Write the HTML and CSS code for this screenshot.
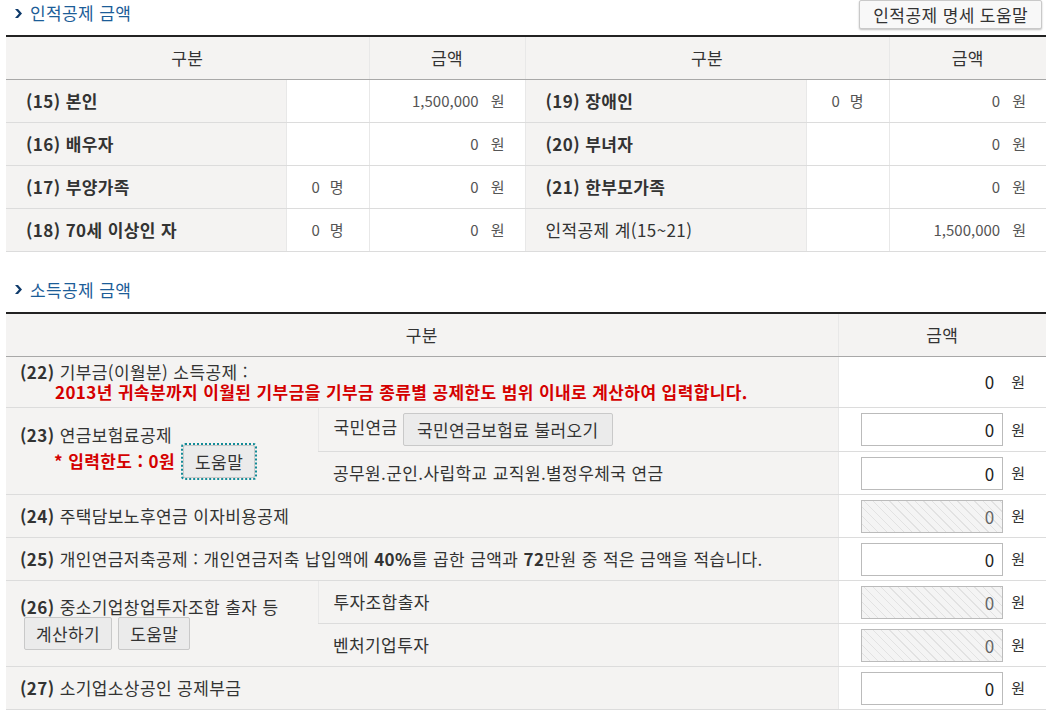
FILE: index.html
```html
<!DOCTYPE html>
<html lang="ko">
  <head>
    <meta charset="UTF-8" />
    <title>인적공제 / 소득공제 금액</title>
    <link rel="stylesheet" href="styles.css">
  </head>
  <body>
    <div class="page">
      <div class="section-head">
        <h2 class="section-title">
          <svg class="chevron" width="7" height="9" viewBox="0 0 7 9"><path d="M0 0H3L7 4.5L3 9H0L4 4.5Z" /></svg>
          인적공제 금액
        </h2>
        <button class="btn btn-guide">인적공제 명세 도움말</button>
      </div>

      <table class="grid grid-person">
        <colgroup>
          <col style="width: 280px" />
          <col style="width: 83px" />
          <col style="width: 156px" />
          <col style="width: 281px" />
          <col style="width: 83px" />
          <col style="width: 157px" />
        </colgroup>
        <thead>
          <tr>
            <th colspan="2">구분</th>
            <th>금액</th>
            <th colspan="2">구분</th>
            <th>금액</th>
          </tr>
        </thead>
        <tbody>
          <tr>
            <td class="label">(15) 본인</td>
            <td class="count"></td>
            <td class="amount">1,500,000<span class="unit">원</span></td>
            <td class="label">(19) 장애인</td>
            <td class="count">0<span class="unit-sm">명</span></td>
            <td class="amount">0<span class="unit">원</span></td>
          </tr>
          <tr>
            <td class="label">(16) 배우자</td>
            <td class="count"></td>
            <td class="amount">0<span class="unit">원</span></td>
            <td class="label">(20) 부녀자</td>
            <td class="count"></td>
            <td class="amount">0<span class="unit">원</span></td>
          </tr>
          <tr>
            <td class="label">(17) 부양가족</td>
            <td class="count">0<span class="unit-sm">명</span></td>
            <td class="amount">0<span class="unit">원</span></td>
            <td class="label">(21) 한부모가족</td>
            <td class="count"></td>
            <td class="amount">0<span class="unit">원</span></td>
          </tr>
          <tr>
            <td class="label">(18) 70세 이상인 자</td>
            <td class="count">0<span class="unit-sm">명</span></td>
            <td class="amount">0<span class="unit">원</span></td>
            <td class="label total">인적공제 계(15~21)</td>
            <td class="count"></td>
            <td class="amount">1,500,000<span class="unit">원</span></td>
          </tr>
        </tbody>
      </table>

      <div class="section-head section-head-next">
        <h2 class="section-title">
          <svg class="chevron" width="7" height="9" viewBox="0 0 7 9"><path d="M0 0H3L7 4.5L3 9H0L4 4.5Z" /></svg>
          소득공제 금액
        </h2>
      </div>

      <table class="grid grid-income">
        <colgroup>
          <col style="width: 312px" />
          <col style="width: 520px" />
          <col style="width: 208px" />
        </colgroup>
        <thead>
          <tr>
            <th colspan="2">구분</th>
            <th>금액</th>
          </tr>
        </thead>
        <tbody>
          <tr class="row-tall">
            <td class="label" colspan="2">
              <div><b>(22)</b> 기부금(이월분) 소득공제 :</div>
              <div class="note">2013년 귀속분까지 이월된 기부금을 기부금 종류별 공제한도 범위 이내로 계산하여 입력합니다.</div>
            </td>
            <td class="amount">
              <div class="amount-box"><span class="plain">0</span><span class="unit">원</span></div>
            </td>
          </tr>
          <tr class="row-pension">
            <td class="label" rowspan="2">
              <div><b>(23)</b> 연금보험료공제</div>
              <div class="limit-line">
                <span class="limit">* 입력한도 : 0원</span>
                <button class="btn btn-small is-focus">도움말</button>
              </div>
            </td>
            <td class="sub">
              국민연금
              <button class="btn btn-load">국민연금보험료 불러오기</button>
            </td>
            <td class="amount">
              <div class="amount-box"><input class="money" type="text" value="0" /><span class="unit">원</span></div>
            </td>
          </tr>
          <tr>
            <td class="sub">공무원.군인.사립학교 교직원.별정우체국 연금</td>
            <td class="amount">
              <div class="amount-box"><input class="money" type="text" value="0" /><span class="unit">원</span></div>
            </td>
          </tr>
          <tr>
            <td class="label" colspan="2"><b>(24)</b> 주택담보노후연금 이자비용공제</td>
            <td class="amount">
              <div class="amount-box"><input class="money" type="text" value="0" disabled /><span class="unit">원</span></div>
            </td>
          </tr>
          <tr>
            <td class="label" colspan="2"><b>(25)</b> 개인연금저축공제 : 개인연금저축 납입액에 <b>40%</b>를 곱한 금액과 <b>72</b>만원 중 적은 금액을 적습니다.</td>
            <td class="amount">
              <div class="amount-box"><input class="money" type="text" value="0" /><span class="unit">원</span></div>
            </td>
          </tr>
          <tr>
            <td class="label" rowspan="2">
              <div><b>(26)</b> 중소기업창업투자조합 출자 등</div>
              <div class="btn-line">
                <button class="btn btn-small">계산하기</button>
                <button class="btn btn-small">도움말</button>
              </div>
            </td>
            <td class="sub">투자조합출자</td>
            <td class="amount">
              <div class="amount-box"><input class="money" type="text" value="0" disabled /><span class="unit">원</span></div>
            </td>
          </tr>
          <tr>
            <td class="sub">벤처기업투자</td>
            <td class="amount">
              <div class="amount-box"><input class="money" type="text" value="0" disabled /><span class="unit">원</span></div>
            </td>
          </tr>
          <tr>
            <td class="label" colspan="2"><b>(27)</b> 소기업소상공인 공제부금</td>
            <td class="amount">
              <div class="amount-box"><input class="money" type="text" value="0" /><span class="unit">원</span></div>
            </td>
          </tr>
        </tbody>
      </table>
    </div>
  </body>
</html>
```

FILE: styles.css
```css
:root {
  --text: #333;
  --muted: #555;
  --title-blue: #1c5d98;
  --cell-gray: #f4f3f2;
  --line: #dcdcdc;
  --line-soft: #e8e8e8;
  --red: #d40000;
}
* {
  box-sizing: border-box;
}
body {
  margin: 0;
  font-family: "Noto Sans CJK KR", sans-serif;
  font-size: 17px;
  letter-spacing: 0.4px;
  color: var(--text);
  background-color: #fff;
}
.page {
  padding-left: 6px;
}
.section-head {
  display: flex;
  justify-content: space-between;
  align-items: flex-start;
  height: 35px;
}
.section-head-next {
  margin-top: 25px;
}
.section-title {
  display: flex;
  align-items: center;
  gap: 8px;
  margin: 0;
  padding-left: 9px;
  font-size: 17px;
  font-weight: normal;
  line-height: 26px;
  color: var(--title-blue);
}
.chevron {
  fill: #0f3b6b;
}
.btn {
  font-family: inherit;
  font-size: 17px;
  letter-spacing: 0.4px;
  color: var(--text);
  background-color: #ebebeb;
  border: 1px solid #c9c9c9;
  border-radius: 2px;
  height: 33px;
  padding: 0 11px;
  line-height: 1;
  cursor: pointer;
}
.btn-guide {
  height: 29px;
  margin-right: 4px;
  padding: 0 13px;
  background-color: #f8f8f8;
  box-shadow: 0 1px 2px rgba(0, 0, 0, 0.25);
}
.btn-load {
  width: 210px;
  margin-left: 0;
  vertical-align: middle;
}
.btn-small {
  height: 33px;
}
.is-focus {
  outline: 2px dotted #128a96;
  outline-offset: 0;
}

/* tables */
.grid {
  width: 1040px;
  table-layout: fixed;
  border-collapse: collapse;
  border-top: 2px solid #222;
}
.grid th,
.grid td {
  height: 43px;
  padding: 0 20px;
  border-bottom: 1px solid var(--line);
  border-left: 1px solid var(--line-soft);
  line-height: 20px;
}
.grid th:first-child,
.grid td:first-child {
  border-left: 0;
}
.grid thead th {
  height: 43px;
  font-weight: normal;
  text-align: center;
  background-color: var(--cell-gray);
  border-bottom: 1px solid #a8a8a8;
}
.grid-income thead th {
  height: 44px;
}
.label {
  background-color: var(--cell-gray);
}
.grid-person .label {
  font-weight: bold;
}
.grid-person .total {
  font-weight: normal;
}
.count {
  text-align: center;
  color: var(--muted);
  font-size: 15px;
  letter-spacing: 0;
}
.amount {
  text-align: right;
  color: var(--muted);
  font-size: 15px;
  letter-spacing: 0;
  white-space: nowrap;
}
.unit {
  margin-left: 12px;
}
.unit-sm {
  margin-left: 10px;
}

.grid-income .label {
  padding-left: 14px;
}
.grid-income .sub {
  padding-left: 15px;
  background-color: var(--cell-gray);
}
.grid-income .amount {
  padding-right: 21px;
}
.amount-box {
  display: flex;
  justify-content: flex-end;
  align-items: center;
}
.grid-income .unit {
  margin-left: 8px;
  color: var(--text);
}
.row-tall td {
  height: 51px;
}
.row-pension td {
  height: 44px;
}
.note {
  padding-left: 35px;
  font-weight: bold;
  color: var(--red);
}
.limit-line {
  display: flex;
  align-items: center;
  gap: 8px;
  padding-left: 34px;
}
.limit {
  font-weight: bold;
  color: var(--red);
}
.btn-line {
  display: flex;
  gap: 6px;
  padding-left: 4px;
}
.plain {
  font-size: 17px;
  color: #222;
  margin-right: 9px;
}
.money {
  width: 142px;
  height: 33px;
  padding: 0 8px;
  font-family: inherit;
  font-size: 17px;
  color: #222;
  text-align: right;
  background-color: #fff;
  border: 1px solid #bbb;
}
.money:disabled {
  color: #666;
  background: repeating-linear-gradient(45deg, #f4f4f4 0, #f4f4f4 5px, #e2e2e2 5px, #e2e2e2 6px);
}
```
